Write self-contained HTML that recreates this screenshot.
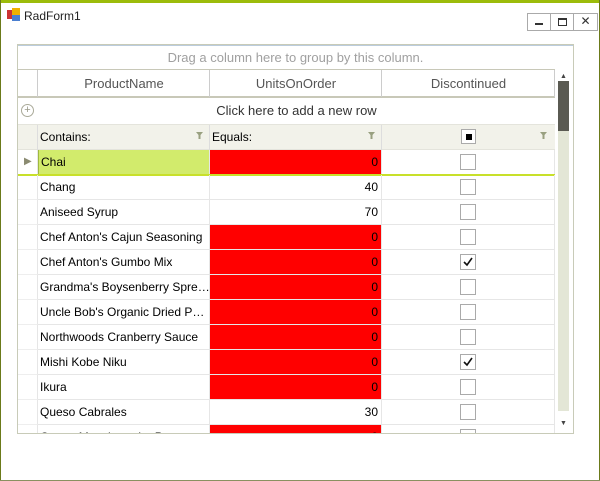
<!DOCTYPE html><html><head><style>
*{margin:0;padding:0;box-sizing:border-box}
body{width:600px;height:481px;background:#fff;font-family:"Liberation Sans",sans-serif;position:relative;overflow:hidden;font-size:12px;color:#000}
.a{position:absolute}
.cell{position:absolute;height:25px;line-height:24px;border-bottom:1px solid #e6e6e6;border-right:1px solid #e6e6e6;white-space:nowrap;overflow:hidden}
.cb{position:absolute;width:16px;height:16px;border:1px solid #aaa;background:#fff}
</style></head><body>
<div class="a" style="left:0;top:0;width:600px;height:3px;background:#9cbc0a"></div>
<div class="a" style="left:0;top:0;width:1px;height:481px;background:#6b7a1a"></div>
<div class="a" style="right:0;top:0;width:1px;height:481px;background:#6b7a1a"></div>
<div class="a" style="left:0;bottom:0;width:600px;height:1px;background:#8a9060"></div>
<svg class="a" style="left:7px;top:8px" width="14" height="14"><rect x="0" y="2" width="6" height="9" fill="#c33"/><rect x="5" y="0" width="8" height="7" fill="#f0b000"/><rect x="5" y="7" width="8" height="6" fill="#4a7fd0"/></svg>
<div class="a" style="left:24px;top:9px;font-size:12px;color:#222">RadForm1</div>
<div class="a" style="left:527px;top:13px;width:73px;height:18px;">
<div class="a" style="left:0;top:0;width:24px;height:18px;border:1px solid #aaa"><div class="a" style="left:7px;top:9px;width:8px;height:2px;background:#333"></div></div>
<div class="a" style="left:23px;top:0;width:24px;height:18px;border:1px solid #aaa"><div class="a" style="left:7px;top:4px;width:9px;height:8px;border:1px solid #333;border-top-width:2px"></div></div>
<div class="a" style="left:46px;top:0;width:25px;height:18px;border:1px solid #aaa;text-align:center;line-height:15px;font-size:12px;color:#333">✕</div>
</div>
<div class="a" style="left:17px;top:44px;width:557px;height:390px;border:1px solid #c8cbb8;overflow:hidden">
<div class="a" style="left:0;top:0;width:555px;height:24px;border-top:1px solid #bcd;text-align:center;line-height:24px;color:#a0a0a0;font-size:13px">Drag a column here to group by this column.</div>
<div class="a" style="left:0;top:24px;width:537px;height:29px;border-top:1px solid #c8c8b8;border-bottom:2px solid #c8c8b8;font-size:13px;color:#555">
<div class="a" style="left:19px;top:0;width:1px;height:27px;background:#ccc"></div>
<div class="a" style="left:20px;width:172px;text-align:center;line-height:27px">ProductName</div>
<div class="a" style="left:191px;top:0;width:1px;height:27px;background:#ccc"></div>
<div class="a" style="left:192px;width:172px;text-align:center;line-height:27px">UnitsOnOrder</div>
<div class="a" style="left:363px;top:0;width:1px;height:27px;background:#ccc"></div>
<div class="a" style="left:364px;width:173px;text-align:center;line-height:27px">Discontinued</div>
<div class="a" style="left:536px;top:0;width:1px;height:27px;background:#ccc"></div>
</div>
<div class="a" style="left:0;top:53px;width:537px;height:26px;font-size:13px;color:#333;text-align:center;line-height:26px;padding-left:20px">Click here to add a new row</div>
<div class="a" style="left:3px;top:59px;width:13px;height:13px;border:1px solid #aa9;border-radius:50%;color:#998;font-size:11px;line-height:10px;text-align:center">+</div>
<div class="a" style="left:0;top:79px;width:537px;height:26px;background:#f2f2ea;border-top:1px solid #e4e4dc;border-bottom:1px solid #e4e4dc">
<div class="a" style="left:19px;top:0;width:1px;height:25px;background:#ddd"></div>
<div class="a" style="left:22px;top:5px">Contains:</div>
<svg class="a" style="left:178px;top:7px" width="8" height="8"><path d="M0 0H7L4.5 3V7H2.5V3Z" fill="#99a080"/></svg>
<div class="a" style="left:191px;top:0;width:1px;height:25px;background:#ddd"></div>
<div class="a" style="left:194px;top:5px">Equals:</div>
<svg class="a" style="left:350px;top:7px" width="8" height="8"><path d="M0 0H7L4.5 3V7H2.5V3Z" fill="#99a080"/></svg>
<div class="a" style="left:363px;top:0;width:1px;height:25px;background:#ddd"></div>
<div class="cb" style="left:443px;top:4px;width:15px;height:15px"><div class="a" style="left:4px;top:4px;width:6px;height:6px;background:#000"></div></div>
<svg class="a" style="left:522px;top:7px" width="8" height="8"><path d="M0 0H7L4.5 3V7H2.5V3Z" fill="#99a080"/></svg>
</div>
<div id="rows"></div>
<div class="a" style="left:538px;top:24px;width:16px;height:365px;background:#fff">
<div class="a" style="left:4px;top:4px;color:#444;font-size:7px">▲</div>
<div class="a" style="left:2px;top:12px;width:11px;height:330px;background:#e3e6d6"></div>
<div class="a" style="left:2px;top:12px;width:11px;height:50px;background:#5a5a52"></div>
<div class="a" style="left:4px;top:351px;color:#444;font-size:7px">▼</div>
</div>
</div>
<script>
var d=[["Chai","0",1,0],["Chang","40",0,0],["Aniseed Syrup","70",0,0],["Chef Anton's Cajun Seasoning","0",1,0],["Chef Anton's Gumbo Mix","0",1,1],["Grandma's  Boysenberry  Spre…","0",1,0],["Uncle Bob's Organic Dried P…","0",1,0],["Northwoods Cranberry Sauce","0",1,0],["Mishi Kobe Niku","0",1,1],["Ikura","0",1,0],["Queso Cabrales","30",0,0],["Queso Manchego La Pastora","0",1,0]];
var h="";d.forEach(function(r,i){var t=105+i*25;
h+='<div class="cell" style="left:0;top:'+t+'px;width:20px;border-bottom-color:#eee">'+(i==0?'<span style="position:absolute;left:6px;top:0;color:#8a8a70;font-size:10px">▶</span>':'')+'</div>';
h+='<div class="cell" style="left:20px;top:'+t+'px;width:172px;padding-left:2px;'+(i==0?'background:#d2eb6c;border-left:1px solid #a0b840;':'')+'">'+r[0]+'</div>';
h+='<div class="cell" style="left:192px;top:'+t+'px;width:172px;text-align:right;padding-right:3px;'+(r[2]?'background:#ff0000;':'')+'">'+r[1]+'</div>';
h+='<div class="cell" style="left:364px;top:'+t+'px;width:173px"><div class="cb" style="left:78px;top:4px">'+(r[3]?'<svg width="14" height="14" style="position:absolute;left:0;top:0"><path d="M3 7 L6 10 L11 3" stroke="#111" stroke-width="1.6" fill="none"/></svg>':'')+'</div></div>';
if(i==0)h+='<div class="a" style="left:0;top:'+(t+24)+'px;width:537px;height:2px;background:#c8e02a"></div>';
});document.getElementById("rows").innerHTML=h;
</script>
</body></html>
